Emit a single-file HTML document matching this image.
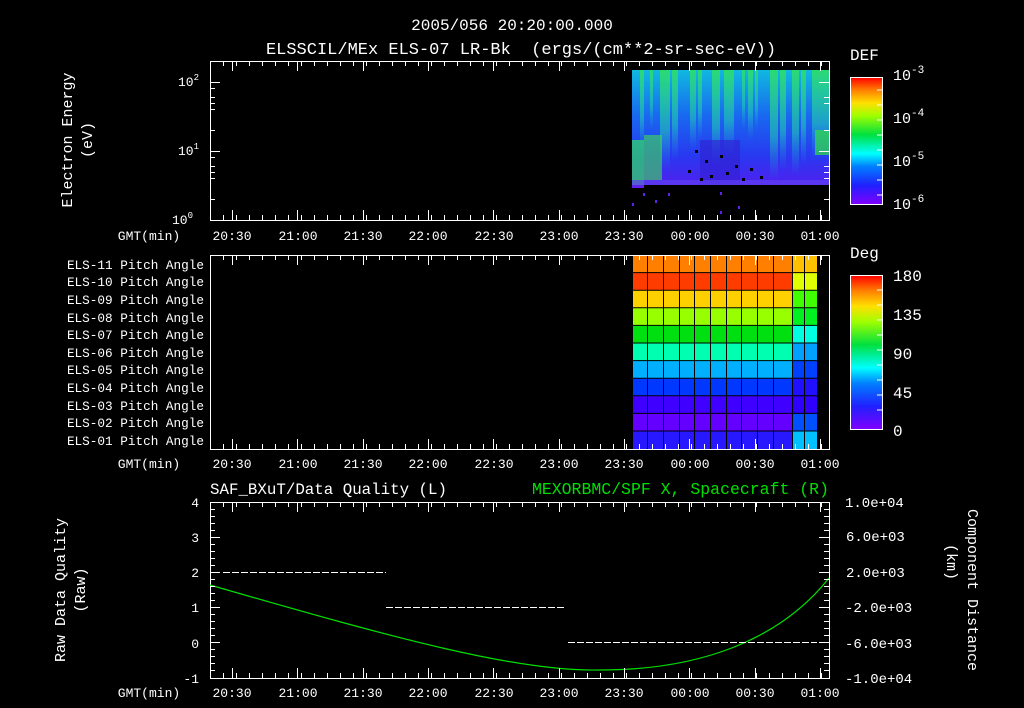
<!DOCTYPE html>
<html><head><meta charset="utf-8"><style>
html,body{margin:0;padding:0;background:#000;width:1024px;height:708px;overflow:hidden}
svg text{font-family:"Liberation Mono",monospace;fill:#fff}
</style></head><body>
<svg width="1024" height="708" viewBox="0 0 1024 708" xmlns="http://www.w3.org/2000/svg">
<defs>
<linearGradient id="rb" x1="0" y1="1" x2="0" y2="0">
<stop offset="0" stop-color="#8000ff"/><stop offset="0.15" stop-color="#2020ff"/><stop offset="0.3" stop-color="#0080ff"/><stop offset="0.4" stop-color="#00ffff"/><stop offset="0.55" stop-color="#00e040"/><stop offset="0.7" stop-color="#a0ff00"/><stop offset="0.8" stop-color="#ffe000"/><stop offset="0.9" stop-color="#ff8000"/><stop offset="1" stop-color="#ff0000"/>
</linearGradient>
<linearGradient id="spec" x1="0" y1="0" x2="0" y2="1">
<stop offset="0" stop-color="#10b8e0"/><stop offset="0.4" stop-color="#1868f0"/><stop offset="0.75" stop-color="#2838f0"/><stop offset="1" stop-color="#5020f0"/>
</linearGradient>
<linearGradient id="gs" x1="0" y1="0" x2="0" y2="1">
<stop offset="0" stop-color="#30e060" stop-opacity="0.85"/><stop offset="0.6" stop-color="#20d0b0" stop-opacity="0.55"/><stop offset="1" stop-color="#20a0e0" stop-opacity="0"/>
</linearGradient>
</defs>

<text x="512" y="30" font-size="16" text-anchor="middle">2005/056 20:20:00.000</text>
<text x="521" y="54" font-size="17" text-anchor="middle" xml:space="preserve">ELSSCIL/MEx ELS-07 LR-Bk  (ergs/(cm**2-sr-sec-eV))</text>

<!-- Panel 1 spectrogram -->
<rect x="632" y="70" width="197" height="115" fill="url(#spec)"/>
<g fill="url(#gs)">
<rect x="660" y="70" width="10" height="100"/><rect x="672" y="70" width="6" height="90"/><rect x="690" y="70" width="6" height="80"/><rect x="698" y="70" width="4" height="70"/>
<rect x="712" y="70" width="8" height="95"/><rect x="724" y="70" width="10" height="85"/><rect x="748" y="70" width="5" height="70"/><rect x="755" y="70" width="3" height="60"/>
<rect x="770" y="70" width="8" height="110"/><rect x="780" y="70" width="6" height="100"/><rect x="792" y="70" width="7" height="105"/><rect x="801" y="70" width="5" height="95"/>
<rect x="812" y="70" width="17" height="90"/><rect x="742" y="70" width="3" height="60"/><rect x="640" y="70" width="4" height="80"/><rect x="650" y="70" width="3" height="60"/>
</g>
<rect x="632" y="140" width="12" height="45" fill="#30e060" opacity="0.7"/>
<rect x="644" y="135" width="18" height="45" fill="#40e050" opacity="0.6"/>
<rect x="815" y="130" width="14" height="25" fill="#30e040" opacity="0.7"/>
<rect x="700" y="140" width="40" height="45" fill="#3020d0" opacity="0.6"/>
<rect x="632" y="180" width="197" height="5" fill="#6040f0" opacity="0.7"/>
<g fill="#000"><rect x="695" y="150" width="3" height="3"/><rect x="705" y="160" width="3" height="3"/><rect x="720" y="155" width="3" height="3"/><rect x="735" y="165" width="3" height="3"/><rect x="688" y="170" width="3" height="3"/><rect x="710" y="175" width="3" height="3"/><rect x="750" y="168" width="3" height="3"/><rect x="742" y="178" width="3" height="3"/><rect x="700" y="178" width="3" height="3"/><rect x="726" y="172" width="3" height="3"/><rect x="760" y="176" width="3" height="3"/></g>
<g fill="#6020f0"><rect x="632" y="185" width="12" height="3"/><rect x="643" y="193" width="2" height="3"/><rect x="655" y="200" width="2" height="3"/><rect x="668" y="193" width="2" height="3"/><rect x="720" y="192" width="2" height="3"/><rect x="738" y="206" width="2" height="3"/><rect x="632" y="203" width="2" height="3"/><rect x="720" y="211" width="2" height="3"/></g>

<rect x="210.5" y="61.5" width="619" height="159" stroke="#fff" fill="none"/>
<text x="178" y="86" font-size="13">10<tspan dy="-6" font-size="9">2</tspan></text>
<text x="178" y="155" font-size="13">10<tspan dy="-6" font-size="9">1</tspan></text>
<text x="172" y="224" font-size="13">10<tspan dy="-6" font-size="9">0</tspan></text>
<text transform="translate(72,140) rotate(-90)" font-size="15" text-anchor="middle">Electron Energy</text>
<text transform="translate(92,140) rotate(-90)" font-size="15" text-anchor="middle">(eV)</text>

<!-- Panel 2 grid -->
<g>
<rect x="632" y="255" width="185" height="17.6" fill="#ff8000"/>
<rect x="632" y="272.6" width="185" height="17.6" fill="#ff3c00"/>
<rect x="632" y="290.2" width="185" height="17.6" fill="#ffd000"/>
<rect x="632" y="307.8" width="185" height="17.6" fill="#98ff00"/>
<rect x="632" y="325.4" width="185" height="17.6" fill="#00e010"/>
<rect x="632" y="343" width="185" height="17.6" fill="#00ffb0"/>
<rect x="632" y="360.6" width="185" height="17.6" fill="#00b0ff"/>
<rect x="632" y="378.2" width="185" height="17.6" fill="#0038ff"/>
<rect x="632" y="395.8" width="185" height="17.6" fill="#4000ff"/>
<rect x="632" y="413.4" width="185" height="17.6" fill="#6400ff"/>
<rect x="632" y="431" width="185" height="18" fill="#2818ff"/>
<rect x="792" y="255" width="25" height="17.6" fill="#ffc000"/>
<rect x="792" y="272.6" width="25" height="17.6" fill="#e0ff00"/>
<rect x="792" y="290.2" width="25" height="17.6" fill="#40ff00"/>
<rect x="792" y="307.8" width="25" height="17.6" fill="#00f020"/>
<rect x="792" y="325.4" width="25" height="17.6" fill="#00ffe0"/>
<rect x="792" y="343" width="25" height="17.6" fill="#00a0ff"/>
<rect x="792" y="360.6" width="25" height="17.6" fill="#0040ff"/>
<rect x="792" y="378.2" width="25" height="17.6" fill="#2010ff"/>
<rect x="792" y="395.8" width="25" height="17.6" fill="#3000ff"/>
<rect x="792" y="413.4" width="25" height="17.6" fill="#0050ff"/>
<rect x="792" y="431" width="25" height="18" fill="#00c0ff"/>
<g stroke="#000" stroke-width="1">
<line x1="632" y1="272.6" x2="817" y2="272.6"/><line x1="632" y1="290.2" x2="817" y2="290.2"/><line x1="632" y1="307.8" x2="817" y2="307.8"/><line x1="632" y1="325.4" x2="817" y2="325.4"/><line x1="632" y1="343" x2="817" y2="343"/><line x1="632" y1="360.6" x2="817" y2="360.6"/><line x1="632" y1="378.2" x2="817" y2="378.2"/><line x1="632" y1="395.8" x2="817" y2="395.8"/><line x1="632" y1="413.4" x2="817" y2="413.4"/><line x1="632" y1="431" x2="817" y2="431"/>
<line x1="632.5" y1="255" x2="632.5" y2="449"/><line x1="647.5" y1="255" x2="647.5" y2="449"/><line x1="663.5" y1="255" x2="663.5" y2="449"/><line x1="679.5" y1="255" x2="679.5" y2="449"/><line x1="694.5" y1="255" x2="694.5" y2="449"/><line x1="710.5" y1="255" x2="710.5" y2="449"/><line x1="726.5" y1="255" x2="726.5" y2="449"/><line x1="741.5" y1="255" x2="741.5" y2="449"/><line x1="757.5" y1="255" x2="757.5" y2="449"/><line x1="773.5" y1="255" x2="773.5" y2="449"/><line x1="792.5" y1="255" x2="792.5" y2="449"/><line x1="804.5" y1="255" x2="804.5" y2="449"/><line x1="817.5" y1="255" x2="817.5" y2="449"/>
</g>
</g>
<rect x="210.5" y="255.5" width="619" height="194" stroke="#fff" fill="none"/>
<g font-size="12.7" text-anchor="end">
<text x="204" y="269">ELS-11 Pitch Angle</text>
<text x="204" y="286">ELS-10 Pitch Angle</text>
<text x="204" y="304">ELS-09 Pitch Angle</text>
<text x="204" y="322">ELS-08 Pitch Angle</text>
<text x="204" y="339">ELS-07 Pitch Angle</text>
<text x="204" y="357">ELS-06 Pitch Angle</text>
<text x="204" y="374">ELS-05 Pitch Angle</text>
<text x="204" y="392">ELS-04 Pitch Angle</text>
<text x="204" y="410">ELS-03 Pitch Angle</text>
<text x="204" y="427">ELS-02 Pitch Angle</text>
<text x="204" y="445">ELS-01 Pitch Angle</text>
</g>

<!-- Panel 3 -->
<rect x="210.5" y="502.5" width="619" height="176" stroke="#fff" fill="none"/>
<path d="M210 585 C 400 640, 520 672, 600 670 C 700 670, 780 640, 829 578" stroke="#00e000" stroke-width="1.2" fill="none"/>
<g stroke="#fff" stroke-width="1" stroke-dasharray="7,2">
<line x1="223" y1="572.5" x2="386" y2="572.5"/>
<line x1="386" y1="607.5" x2="566" y2="607.5"/>
<line x1="568" y1="642.5" x2="817" y2="642.5"/>
</g>
<text x="210" y="494" font-size="15.8">SAF_BXuT/Data Quality (L)</text>
<text x="829" y="494" font-size="16.5" text-anchor="end" style="fill:#00e000">MEXORBMC/SPF X, Spacecraft (R)</text>
<g font-size="13" text-anchor="end">
<text x="199" y="507">4</text><text x="199" y="542">3</text><text x="199" y="577">2</text><text x="199" y="612">1</text><text x="199" y="648">0</text><text x="199" y="683">-1</text>
</g>
<g font-size="14">
<text x="845" y="507">1.0e+04</text><text x="846" y="541">6.0e+03</text><text x="846" y="577">2.0e+03</text><text x="845" y="612">-2.0e+03</text><text x="845" y="648">-6.0e+03</text><text x="845" y="683">-1.0e+04</text>
</g>
<text transform="translate(65,590) rotate(-90)" font-size="15" text-anchor="middle">Raw Data Quality</text>
<text transform="translate(85,590) rotate(-90)" font-size="15" text-anchor="middle">(Raw)</text>
<text transform="translate(968,590) rotate(90)" font-size="15" text-anchor="middle">Component Distance</text>
<text transform="translate(947,562) rotate(90)" font-size="15" text-anchor="middle">(km)</text>

<g stroke="#fff" stroke-width="1">
<path d="M223.5 61v5M236.5 61v5M249.5 61v5M262.5 61v5M275.5 61v5M288.5 61v5M301.5 61v5M314.5 61v5M327.5 61v5M340.5 61v5M353.5 61v5M366.5 61v5M379.5 61v5M392.5 61v5M405.5 61v5M418.5 61v5M431.5 61v5M444.5 61v5M457.5 61v5M470.5 61v5M483.5 61v5M496.5 61v5M509.5 61v5M522.5 61v5M535.5 61v5M548.5 61v5M561.5 61v5M574.5 61v5M587.5 61v5M600.5 61v5M613.5 61v5M626.5 61v5M639.5 61v5M652.5 61v5M665.5 61v5M678.5 61v5M691.5 61v5M704.5 61v5M717.5 61v5M730.5 61v5M743.5 61v5M756.5 61v5M769.5 61v5M782.5 61v5M795.5 61v5M808.5 61v5M821.5 61v5"/>
<path d="M232.5 61v10M297.5 61v10M363.5 61v10M428.5 61v10M493.5 61v10M559.5 61v10M624.5 61v10M689.5 61v10M755.5 61v10M820.5 61v10"/>
<path d="M223.5 220v-5M236.5 220v-5M249.5 220v-5M262.5 220v-5M275.5 220v-5M288.5 220v-5M301.5 220v-5M314.5 220v-5M327.5 220v-5M340.5 220v-5M353.5 220v-5M366.5 220v-5M379.5 220v-5M392.5 220v-5M405.5 220v-5M418.5 220v-5M431.5 220v-5M444.5 220v-5M457.5 220v-5M470.5 220v-5M483.5 220v-5M496.5 220v-5M509.5 220v-5M522.5 220v-5M535.5 220v-5M548.5 220v-5M561.5 220v-5M574.5 220v-5M587.5 220v-5M600.5 220v-5M613.5 220v-5M626.5 220v-5M639.5 220v-5M652.5 220v-5M665.5 220v-5M678.5 220v-5M691.5 220v-5M704.5 220v-5M717.5 220v-5M730.5 220v-5M743.5 220v-5M756.5 220v-5M769.5 220v-5M782.5 220v-5M795.5 220v-5M808.5 220v-5M821.5 220v-5"/>
<path d="M232.5 220v-10M297.5 220v-10M363.5 220v-10M428.5 220v-10M493.5 220v-10M559.5 220v-10M624.5 220v-10M689.5 220v-10M755.5 220v-10M820.5 220v-10"/>
<path d="M210 82.5h10M210 151.5h10M210 103.5h5M210 109.5h5M210 130.5h5M210 199.5h5M210 178.5h5M210 172.5h5M210 88.5h5M210 97.5h5M210 157.5h5M210 166.5h5M829 82.5h-10M829 151.5h-10M829 103.5h-5M829 130.5h-5M829 199.5h-5M829 178.5h-5M829 172.5h-5M829 97.5h-5M829 166.5h-5"/>
<path d="M223.5 255v5M236.5 255v5M249.5 255v5M262.5 255v5M275.5 255v5M288.5 255v5M301.5 255v5M314.5 255v5M327.5 255v5M340.5 255v5M353.5 255v5M366.5 255v5M379.5 255v5M392.5 255v5M405.5 255v5M418.5 255v5M431.5 255v5M444.5 255v5M457.5 255v5M470.5 255v5M483.5 255v5M496.5 255v5M509.5 255v5M522.5 255v5M535.5 255v5M548.5 255v5M561.5 255v5M574.5 255v5M587.5 255v5M600.5 255v5M613.5 255v5M626.5 255v5M639.5 255v5M652.5 255v5M665.5 255v5M678.5 255v5M691.5 255v5M704.5 255v5M717.5 255v5M730.5 255v5M743.5 255v5M756.5 255v5M769.5 255v5M782.5 255v5M795.5 255v5M808.5 255v5M821.5 255v5"/>
<path d="M232.5 255v10M297.5 255v10M363.5 255v10M428.5 255v10M493.5 255v10M559.5 255v10M624.5 255v10M689.5 255v10M755.5 255v10M820.5 255v10"/>
<path d="M223.5 449v-5M236.5 449v-5M249.5 449v-5M262.5 449v-5M275.5 449v-5M288.5 449v-5M301.5 449v-5M314.5 449v-5M327.5 449v-5M340.5 449v-5M353.5 449v-5M366.5 449v-5M379.5 449v-5M392.5 449v-5M405.5 449v-5M418.5 449v-5M431.5 449v-5M444.5 449v-5M457.5 449v-5M470.5 449v-5M483.5 449v-5M496.5 449v-5M509.5 449v-5M522.5 449v-5M535.5 449v-5M548.5 449v-5M561.5 449v-5M574.5 449v-5M587.5 449v-5M600.5 449v-5M613.5 449v-5M626.5 449v-5M639.5 449v-5M652.5 449v-5M665.5 449v-5M678.5 449v-5M691.5 449v-5M704.5 449v-5M717.5 449v-5M730.5 449v-5M743.5 449v-5M756.5 449v-5M769.5 449v-5M782.5 449v-5M795.5 449v-5M808.5 449v-5M821.5 449v-5"/>
<path d="M232.5 449v-10M297.5 449v-10M363.5 449v-10M428.5 449v-10M493.5 449v-10M559.5 449v-10M624.5 449v-10M689.5 449v-10M755.5 449v-10M820.5 449v-10"/>
<path d="M223.5 502v5M236.5 502v5M249.5 502v5M262.5 502v5M275.5 502v5M288.5 502v5M301.5 502v5M314.5 502v5M327.5 502v5M340.5 502v5M353.5 502v5M366.5 502v5M379.5 502v5M392.5 502v5M405.5 502v5M418.5 502v5M431.5 502v5M444.5 502v5M457.5 502v5M470.5 502v5M483.5 502v5M496.5 502v5M509.5 502v5M522.5 502v5M535.5 502v5M548.5 502v5M561.5 502v5M574.5 502v5M587.5 502v5M600.5 502v5M613.5 502v5M626.5 502v5M639.5 502v5M652.5 502v5M665.5 502v5M678.5 502v5M691.5 502v5M704.5 502v5M717.5 502v5M730.5 502v5M743.5 502v5M756.5 502v5M769.5 502v5M782.5 502v5M795.5 502v5M808.5 502v5M821.5 502v5"/>
<path d="M232.5 502v10M297.5 502v10M363.5 502v10M428.5 502v10M493.5 502v10M559.5 502v10M624.5 502v10M689.5 502v10M755.5 502v10M820.5 502v10"/>
<path d="M223.5 678v-5M236.5 678v-5M249.5 678v-5M262.5 678v-5M275.5 678v-5M288.5 678v-5M301.5 678v-5M314.5 678v-5M327.5 678v-5M340.5 678v-5M353.5 678v-5M366.5 678v-5M379.5 678v-5M392.5 678v-5M405.5 678v-5M418.5 678v-5M431.5 678v-5M444.5 678v-5M457.5 678v-5M470.5 678v-5M483.5 678v-5M496.5 678v-5M509.5 678v-5M522.5 678v-5M535.5 678v-5M548.5 678v-5M561.5 678v-5M574.5 678v-5M587.5 678v-5M600.5 678v-5M613.5 678v-5M626.5 678v-5M639.5 678v-5M652.5 678v-5M665.5 678v-5M678.5 678v-5M691.5 678v-5M704.5 678v-5M717.5 678v-5M730.5 678v-5M743.5 678v-5M756.5 678v-5M769.5 678v-5M782.5 678v-5M795.5 678v-5M808.5 678v-5M821.5 678v-5"/>
<path d="M232.5 678v-10M297.5 678v-10M363.5 678v-10M428.5 678v-10M493.5 678v-10M559.5 678v-10M624.5 678v-10M689.5 678v-10M755.5 678v-10M820.5 678v-10"/>
<path d="M210 537.5h10M210 572.5h10M210 607.5h10M210 642.5h10M210 509.5h5M210 516.5h5M210 523.5h5M210 530.5h5M210 544.5h5M210 551.5h5M210 558.5h5M210 565.5h5M210 579.5h5M210 586.5h5M210 593.5h5M210 600.5h5M210 614.5h5M210 621.5h5M210 628.5h5M210 635.5h5M210 649.5h5M210 656.5h5M210 663.5h5M210 670.5h5"/>
<path d="M829 537.5h-10M829 572.5h-10M829 607.5h-10M829 642.5h-10M829 509.5h-5M829 516.5h-5M829 523.5h-5M829 530.5h-5M829 544.5h-5M829 551.5h-5M829 558.5h-5M829 565.5h-5M829 579.5h-5M829 586.5h-5M829 593.5h-5M829 600.5h-5M829 614.5h-5M829 621.5h-5M829 628.5h-5M829 635.5h-5M829 649.5h-5M829 656.5h-5M829 663.5h-5M829 670.5h-5"/>
</g>

<g font-size="13" text-anchor="middle">
<text x="149" y="240">GMT(min)</text>
<text x="232" y="240">20:30</text><text x="298" y="240">21:00</text><text x="363" y="240">21:30</text><text x="428" y="240">22:00</text><text x="494" y="240">22:30</text><text x="559" y="240">23:00</text><text x="624" y="240">23:30</text><text x="690" y="240">00:00</text><text x="755" y="240">00:30</text><text x="820" y="240">01:00</text>
<text x="149" y="468">GMT(min)</text>
<text x="232" y="468">20:30</text><text x="298" y="468">21:00</text><text x="363" y="468">21:30</text><text x="428" y="468">22:00</text><text x="494" y="468">22:30</text><text x="559" y="468">23:00</text><text x="624" y="468">23:30</text><text x="690" y="468">00:00</text><text x="755" y="468">00:30</text><text x="820" y="468">01:00</text>
<text x="149" y="697">GMT(min)</text>
<text x="232" y="697">20:30</text><text x="298" y="697">21:00</text><text x="363" y="697">21:30</text><text x="428" y="697">22:00</text><text x="494" y="697">22:30</text><text x="559" y="697">23:00</text><text x="624" y="697">23:30</text><text x="690" y="697">00:00</text><text x="755" y="697">00:30</text><text x="820" y="697">01:00</text>
</g>

<text x="850" y="60" font-size="16">DEF</text>
<rect x="850.5" y="77.5" width="32" height="127" fill="url(#rb)" stroke="#fff"/>
<g font-size="15"><text x="893" y="80">10<tspan dy="-7" font-size="11">-3</tspan></text>
<text x="893" y="123">10<tspan dy="-7" font-size="11">-4</tspan></text>
<text x="893" y="166">10<tspan dy="-7" font-size="11">-5</tspan></text>
<text x="893" y="209">10<tspan dy="-7" font-size="11">-6</tspan></text></g>
<text x="850" y="258" font-size="16">Deg</text>
<rect x="850.5" y="275.5" width="32" height="154" fill="url(#rb)" stroke="#fff"/>
<g font-size="16"><text x="893" y="281">180</text><text x="893" y="320">135</text><text x="893" y="359">90</text><text x="893" y="398">45</text><text x="893" y="436">0</text></g>
<g stroke="#fff"><path d="M882 90h-5M882 105h-5M882 120h-5M882 135h-5M882 150h-5M882 165h-5M882 180h-5M882 195h-5M882 290h-5M882 305h-5M882 320h-5M882 335h-5M882 350h-5M882 365h-5M882 380h-5M882 395h-5M882 410h-5"/></g>
</svg>
</body></html>
